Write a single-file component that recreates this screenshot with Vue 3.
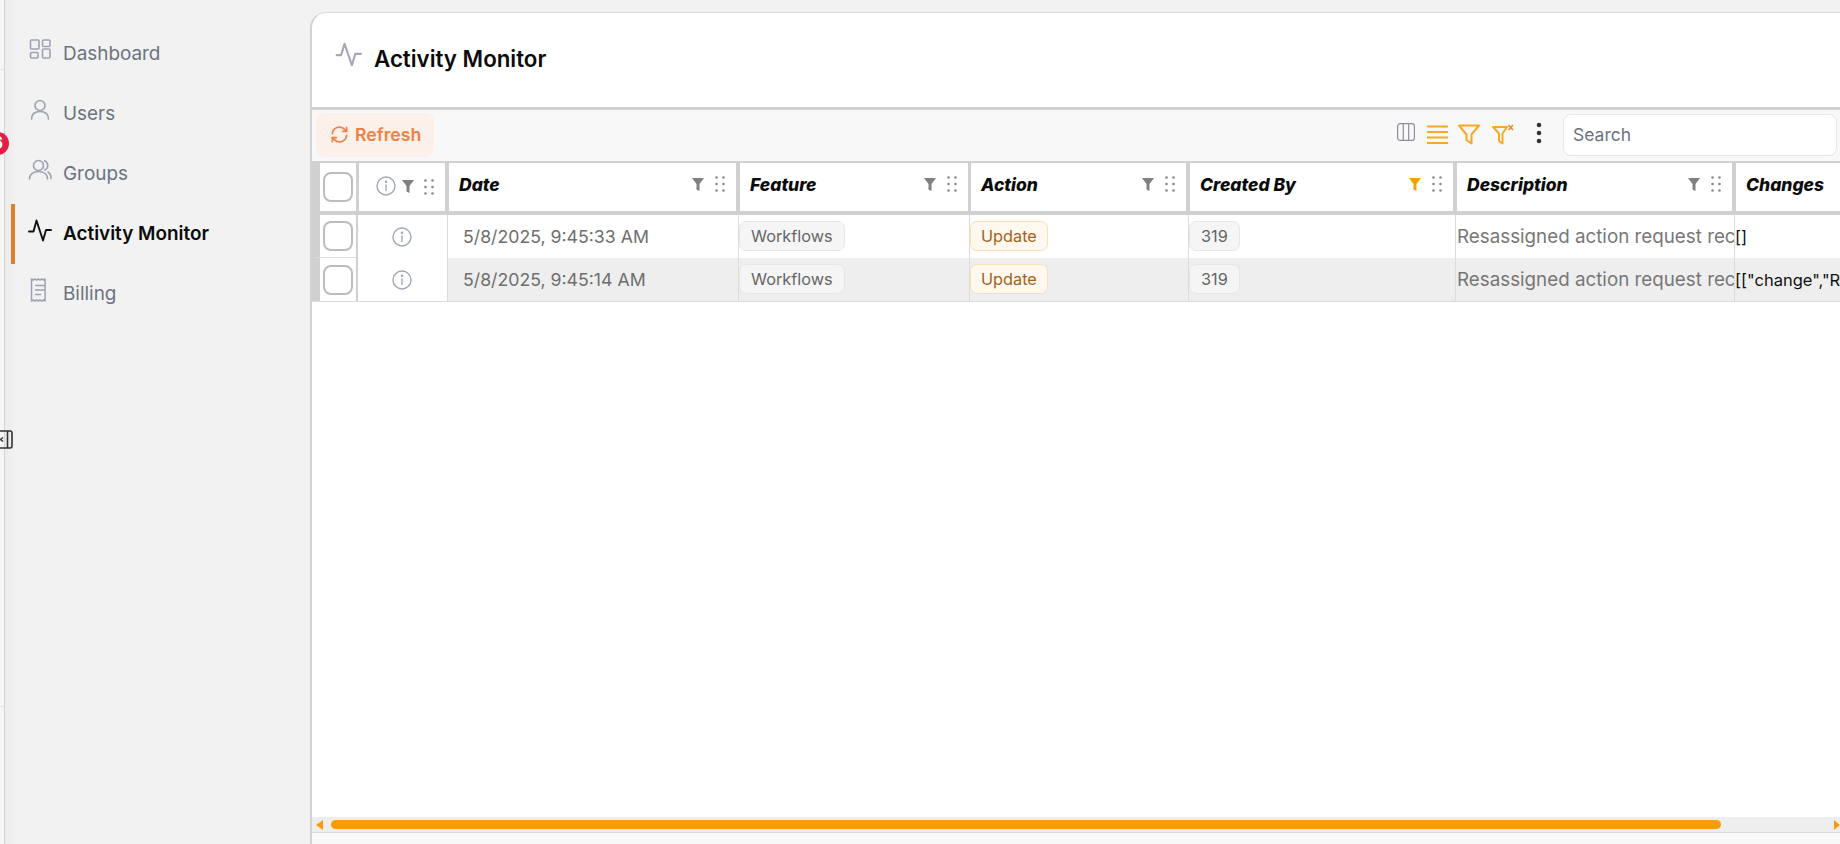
<script setup>
const columns = [
  { key: 'date', label: 'Date', head: 287, gap: 4, body: 291 },
  { key: 'feature', label: 'Feature', head: 228, gap: 3, body: 231 },
  { key: 'action', label: 'Action', head: 215, gap: 4, body: 219 },
  { key: 'created', label: 'Created By', head: 263, gap: 4, body: 267 },
  { key: 'desc', label: 'Description', head: 275, gap: 4, body: 279 },
  { key: 'changes', label: 'Changes', head: 110, gap: 0, body: 110, noTools: true },
]
columns[3].active = true

const rows = [
  { date: '5/8/2025, 9:45:33 AM', changes: '[]' },
  { date: '5/8/2025, 9:45:14 AM', changes: '[["change","R' },
]

const navItems = [
  { label: 'Dashboard', icon: 'dashboard' },
  { label: 'Users', icon: 'user' },
  { label: 'Groups', icon: 'group' },
  { label: 'Activity Monitor', icon: 'activity', active: true },
  { label: 'Billing', icon: 'billing' },
]
</script>

<template>
  <div class="page">
    <aside class="sidebar">
      <div class="rail">
        <div class="rail-top" />
        <div class="rail-mid" />
        <div class="rail-bottom" />
      </div>
      <span class="badge">6</span>
      <svg class="collapse" width="13" height="19" viewBox="0 0 13 19" fill="none" stroke="#333" stroke-width="1.6">
        <rect x="-6" y="1" width="18" height="17" rx="2" />
        <path d="M7.5 1v17" />
        <path d="M3 7.5 0.5 9.5 3 11.5" />
      </svg>
      <nav class="nav">
        <a v-for="item in navItems" :key="item.label" class="nav-item" :class="{ active: item.active }">
          <svg class="nav-icon" width="24" height="24" viewBox="0 0 24 24" fill="none" stroke="currentColor" stroke-width="1.6" stroke-linecap="round" stroke-linejoin="round">
            <template v-if="item.icon === 'dashboard'">
              <rect x="2.500" y="2" width="8.500" height="9" rx="1" />
              <rect x="14.500" y="2" width="7.500" height="6.500" rx="1" />
              <rect x="2.500" y="14.500" width="7.500" height="5.500" rx="1" />
              <rect x="14.500" y="11" width="7.500" height="9" rx="1" />
            </template>
            <template v-else-if="item.icon === 'user'">
              <circle cx="12" cy="7.500" r="5" />
              <path d="M3.500 21c0-5 3.600-7.500 8.500-7.500s8.500 2.500 8.500 7.500" />
            </template>
            <template v-else-if="item.icon === 'group'">
              <circle cx="10.500" cy="7.500" r="5" />
              <path d="M1.500 21c0-5 4-7.500 9-7.500s9 2.500 9 7.500" />
              <path d="M16.500 2.800c2.300 1 3.300 2.700 3.300 4.700s-1 3.500-3 4.500" />
              <path d="M20 14c2 1.200 3 3.500 3 6.500" />
            </template>
            <template v-else-if="item.icon === 'activity'">
              <path d="M1 13.500h4.500l3-11 6.500 20 3-10.500h5" stroke-width="1.900" />
            </template>
            <template v-else>
              <path d="M3.500 1l1.700 1 1.700-1 1.700 1 1.700-1 1.700 1 1.700-1 1.700 1 1.700-1v22l-1.700-1-1.700 1-1.700-1-1.700 1-1.700-1-1.700 1-1.700-1-1.700 1z" stroke-width="1.500" />
              <path d="M7.500 7.500h9M7.500 12h9M7.500 16.500h5" />
            </template>
          </svg>
          <span class="nav-label">{{ item.label }}</span>
        </a>
      </nav>
    </aside>

    <main class="main">
      <header class="card-head">
        <svg class="title-icon" width="27" height="27" viewBox="0 0 24 24" fill="none" stroke="#a3a8b8" stroke-width="1.900" stroke-linecap="round" stroke-linejoin="round">
          <path d="M1.500 12.500h4l3-10 6.500 19 3-10h5" />
        </svg>
        <h1>Activity Monitor</h1>
      </header>

      <div class="toolbar">
        <button class="refresh">
          <svg width="19" height="19" viewBox="0 0 24 24" fill="none" stroke="currentColor" stroke-width="2.200" stroke-linecap="round" stroke-linejoin="round">
            <path d="M3 11a9 9 0 0 1 15.500-5.500L21 8" />
            <path d="M21 3v5h-5" />
            <path d="M21 13a9 9 0 0 1-15.500 5.500L3 16" />
            <path d="M3 21v-5h5" />
          </svg>
          Refresh
        </button>
        <div class="tools">
          <svg class="t-columns" width="18" height="18" viewBox="0 0 18 18" fill="none" stroke="#8b8f9a" stroke-width="1.200">
            <rect x="0.600" y="0.600" width="16.800" height="16.800" rx="2.500" />
            <path d="M6.300 0.600v16.800M11.700 0.600v16.800" />
          </svg>
          <svg class="t-list" width="21" height="21" viewBox="0 0 21 21" fill="none" stroke="#f9a826" stroke-width="2.200">
            <path d="M0 2.500h21M0 8h21M0 13.500h21M0 19h21" />
          </svg>
          <svg class="t-filter" width="22" height="21" viewBox="0 0 22 21" fill="none" stroke="#f9a826" stroke-width="2" stroke-linejoin="round">
            <path d="M1 1.500h20l-7.500 9v9l-5-3.500v-5.500z" />
          </svg>
          <svg class="t-filter-x" width="22" height="21" viewBox="0 0 22 21" fill="none" stroke="#f9a826" stroke-width="2" stroke-linejoin="round">
            <path d="M1 3h14l-4.500 6.500v10l-3.500-2.500v-7.500z" />
            <path d="M16.500 1l4.500 5M21 1l-4.500 5" stroke="#f08a24" stroke-width="1.600" />
          </svg>
          <svg class="t-dots" width="6" height="22" viewBox="0 0 6 22" fill="#333">
            <circle cx="3" cy="3" r="2.300" />
            <circle cx="3" cy="11" r="2.300" />
            <circle cx="3" cy="19" r="2.300" />
          </svg>
          <input class="search" placeholder="Search" />
        </div>
      </div>

      <div class="table">
        <div class="thead">
          <div class="th th-check"><span class="check" /></div>
          <div class="th th-info">
            <svg class="info-head" width="20" height="20" viewBox="0 0 20 20" fill="none" stroke="#a3a8b8" stroke-width="1.400">
              <circle cx="10" cy="10" r="9" />
              <path d="M10 9v5.500" stroke-linecap="round" />
              <circle cx="10" cy="5.800" r="0.600" fill="#a3a8b8" />
            </svg>
            <svg class="funnel" width="12" height="13" viewBox="0 0 12 13">
              <path d="M0 0h12L7.500 6v7l-3-1.500V6z" />
            </svg>
            <svg class="grip" width="10" height="16" viewBox="0 0 10 16" fill="#888">
              <circle cx="1.500" cy="1.500" r="1.300" /><circle cx="8.500" cy="1.500" r="1.300" />
              <circle cx="1.500" cy="8" r="1.300" /><circle cx="8.500" cy="8" r="1.300" />
              <circle cx="1.500" cy="14.500" r="1.300" /><circle cx="8.500" cy="14.500" r="1.300" />
            </svg>
          </div>
          <div v-for="col in columns" :key="col.key" class="th"
            :style="{ width: col.head + 'px', marginRight: col.gap + 'px' }">
            <span class="th-label">{{ col.label }}</span>
            <template v-if="!col.noTools">
              <svg class="funnel" :class="{ on: col.active }" width="12" height="13" viewBox="0 0 12 13">
                <path d="M0 0h12L7.500 6v7l-3-1.500V6z" />
              </svg>
              <svg class="grip" width="10" height="16" viewBox="0 0 10 16" fill="#888">
                <circle cx="1.500" cy="1.500" r="1.300" /><circle cx="8.500" cy="1.500" r="1.300" />
                <circle cx="1.500" cy="8" r="1.300" /><circle cx="8.500" cy="8" r="1.300" />
                <circle cx="1.500" cy="14.500" r="1.300" /><circle cx="8.500" cy="14.500" r="1.300" />
              </svg>
            </template>
          </div>
        </div>

        <div v-for="(row, i) in rows" :key="i" class="tr" :class="{ alt: i % 2 === 1 }">
          <div class="td td-check"><span class="check" /></div>
          <div class="td td-info">
            <svg width="20" height="20" viewBox="0 0 20 20" fill="none" stroke="#a3a8b8" stroke-width="1.400">
              <circle cx="10" cy="10" r="9" />
              <path d="M10 9v5.500" stroke-linecap="round" />
              <circle cx="10" cy="5.800" r="0.600" fill="#a3a8b8" />
            </svg>
          </div>
          <div class="td td-date" :style="{ width: columns[0].body + 'px' }">{{ row.date }}</div>
          <div class="td" :style="{ width: columns[1].body + 'px' }"><span class="tag">Workflows</span></div>
          <div class="td" :style="{ width: columns[2].body + 'px' }"><span class="tag tag-update">Update</span></div>
          <div class="td" :style="{ width: columns[3].body + 'px' }"><span class="tag">319</span></div>
          <div class="td td-desc" :style="{ width: columns[4].body + 'px' }">Resassigned action request rec</div>
          <div class="td td-changes" :style="{ width: columns[5].body + 'px' }">{{ row.changes }}</div>
        </div>

        <div class="table-space" />

        <div class="scrollbar">
          <span class="arrow arrow-left" />
          <div class="thumb" />
          <span class="arrow arrow-right" />
        </div>
      </div>
      <div class="table-foot" />
    </main>
  </div>
</template>

<style scoped>
.page {
  display: flex;
  width: 1840px;
  height: 844px;
  overflow: hidden;
  background: #f2f2f2;
  font-family: Inter, "Noto Sans", sans-serif;
}

.sidebar { position: relative; display: flex; width: 310px; flex-shrink: 0; }
.rail { display: flex; flex-direction: column; width: 4px; background: #f6f6f6; border-right: 1px solid #d2d2d2; }
.rail-top { height: 69px; border-bottom: 1px solid #e2e2e2; }
.rail-mid { height: 636px; border-bottom: 1px solid #e2e2e2; }
.rail-bottom { flex: 1; }
.badge {
  position: absolute;
  left: -14px;
  top: 132px;
  width: 23px;
  height: 23px;
  border-radius: 50%;
  background: #e11d48;
  color: #fff;
  font-size: 17px;
  font-weight: 700;
  line-height: 23px;
  text-align: center;
}
.collapse { position: absolute; left: 0; top: 430px; }

.nav { display: flex; flex-direction: column; flex: 1; padding: 24px 0 0 6px; background: linear-gradient(to right, #ececec, #f2f2f2 12px); }
.nav-item {
  display: flex;
  align-items: center;
  gap: 11px;
  height: 60px;
  padding-left: 17px;
  color: #6b7280;
  font-size: 18.900px;
}
.nav-icon { margin-bottom: 8px; color: #9ea3b4; }
.nav-label { margin-bottom: 2px; }
.nav-item.active { padding-left: 13px; border-left: 4px solid #d9822b; color: #0b0b0b; font-weight: 600; }
.nav-item.active .nav-icon { color: #111; }

.main {
  display: flex;
  flex-direction: column;
  flex: 1;
  min-width: 0;
  margin-top: 12px;
  background: #fff;
  border-left: 2px solid #d2d2d2;
  border-top: 1px solid #dcdcdc;
  border-top-left-radius: 16px;
}

.card-head { display: flex; align-items: center; height: 94px; padding: 0 0 4px 23px; box-sizing: border-box; flex-shrink: 0; }
.title-icon { margin-bottom: 8px; }
.card-head h1 { margin: 0 0 0 12px; font-size: 22.300px; font-weight: 600; color: #0b0b0b; }

.toolbar {
  display: flex;
  align-items: center;
  justify-content: space-between;
  height: 49px;
  flex-shrink: 0;
  padding: 0 3px 2px 4px;
  background: #f8f8f8;
  border-top: 3px solid #d0d0d0;
  border-bottom: 2px solid #d0d0d0;
  box-sizing: content-box;
}
.refresh {
  display: flex;
  align-items: center;
  gap: 6px;
  height: 44px;
  width: 118px;
  padding: 0 0 0 14px;
  border: 0;
  border-radius: 8px;
  background: #fbf1ea;
  color: #ee8145;
  font: 600 17.700px Inter, sans-serif;
}
.tools { display: flex; align-items: center; }
.t-columns { margin-bottom: 6px; }
.t-list { margin-left: 12px; }
.t-filter { margin-left: 10px; }
.t-filter-x { margin-left: 12px; }
.t-dots { margin-left: 22px; margin-bottom: 4px; }
.search {
  width: 274px;
  height: 42px;
  box-sizing: border-box;
  margin-left: 21px;
  padding: 0 9px;
  border: 1px solid #e5e7eb;
  border-radius: 8px;
  background: #fff;
  font: 17.500px Inter, sans-serif;
  outline: none;
}
.search::placeholder { color: #6b7280; opacity: 1; }

.table { display: flex; flex-direction: column; flex: 1; min-height: 0; }
.thead {
  display: flex;
  height: 48px;
  flex-shrink: 0;
  padding-left: 8px;
  background: #d0d0d0;
  border-bottom: 4px solid #d0d0d0;
  box-sizing: content-box;
}
.th {
  display: flex;
  align-items: center;
  flex-shrink: 0;
  padding-left: 10px;
  background: #fff;
  box-sizing: border-box;
}
.th-check { width: 36px; padding-left: 3px; margin-right: 3px; }
.th-info { width: 86px; padding-left: 17px; margin-right: 4px; }
.info-head { margin-bottom: 3px; }
.th-info .funnel { margin: 0 0 1px 6px; }
.th-info .grip { margin: 0 0 0 10px; }
.th-label { flex: 1; margin-bottom: 6px; font-size: 17.500px; font-weight: 800; font-style: italic; color: #0b0b0b; white-space: nowrap; }
.funnel { fill: #808080; margin-bottom: 6px; }
.funnel.on { fill: #f9a000; }
.grip { margin: 0 11px 7px 11px; }

.check {
  display: block;
  width: 30px;
  height: 30px;
  box-sizing: border-box;
  border: 2px solid #bdbdbd;
  border-radius: 8px;
  background: #fff;
}

.tr { display: flex; height: 43px; flex-shrink: 0; }
.td {
  display: flex;
  align-items: center;
  flex-shrink: 0;
  box-sizing: border-box;
  border-right: 1px solid #dcdcdc;
  overflow: hidden;
  white-space: nowrap;
  font-size: 17.700px;
  color: #6e6e6e;
}
.tr.alt { border-bottom: 1px solid #dcdcdc; height: 44px; box-sizing: border-box; }
.tr.alt .td { background: #eeeeee; }
.tr.alt .td-check, .tr.alt .td-info { background: #fff; }
.td-check {
  width: 46px;
  padding-left: 3px;
  border-left: 8px solid #d0d0d0;
  border-right: 2px solid #d0d0d0;
  border-bottom: 1px solid #dcdcdc;
}
.tr.alt .td-check { border-bottom: 0; }
.td-info { width: 90px; justify-content: center; padding-right: 2px; }
.td-date { padding-left: 15px; }
.td-desc { padding-left: 1px; color: #777; font-size: 18.800px; }
.td-changes { color: #111; font-size: 16.500px; border-right: 0; }
.tag {
  padding: 0 11px;
  height: 30px;
  box-sizing: border-box;
  line-height: 28px;
  margin-bottom: 1px;
  border: 1px solid #e6e6e6;
  border-radius: 7px;
  background: #f5f5f5;
  color: #666;
  font-size: 16.300px;
}
.tag-update { padding: 0 10px; background: #fff8ee; border-color: #fadfb8; color: #a2621a; }

.table-space { flex: 1; }
.scrollbar {
  display: flex;
  align-items: center;
  height: 15px;
  flex-shrink: 0;
  background: #eeeeee;
  border-bottom: 1px solid #dcdcdc;
  box-sizing: content-box;
}
.arrow { width: 0; height: 0; border-top: 5px solid transparent; border-bottom: 5px solid transparent; }
.arrow-left { margin-left: 4px; border-right: 7px solid #f79c0f; }
.arrow-right { margin-left: 113px; border-left: 6px solid #f79c0f; }
.thumb { width: 1390px; height: 9px; margin-left: 8px; border-radius: 5px; background: #f99d07; }
.table-foot { height: 11px; flex-shrink: 0; background: #f8f8f8; }
</style>
